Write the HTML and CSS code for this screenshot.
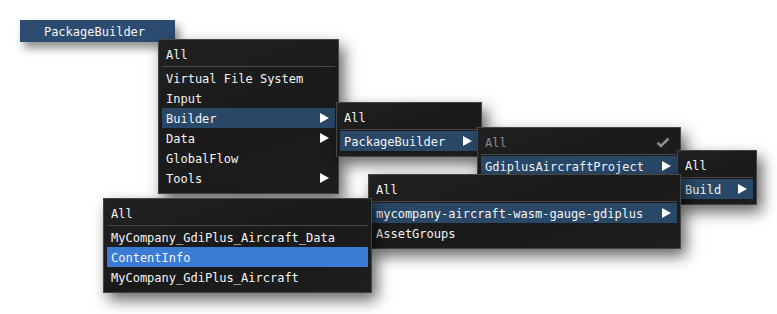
FILE: index.html
```html
<!DOCTYPE html>
<html>
<head>
<meta charset="utf-8">
<link rel="stylesheet" href="styles.css">
</head>
<body>
<div class="stage">
  <div class="root-btn">PackageBuilder</div>

  <div class="menu m1">
    <div class="row">All</div>
    <div class="sep"></div>
    <div class="row">Virtual File System</div>
    <div class="row">Input</div>
    <div class="row sel">Builder<span class="arrow"></span></div>
    <div class="row">Data<span class="arrow"></span></div>
    <div class="row">GlobalFlow</div>
    <div class="row">Tools<span class="arrow"></span></div>
  </div>

  <div class="menu m2">
    <div class="row">All</div>
    <div class="sep"></div>
    <div class="row sel">PackageBuilder<span class="arrow"></span></div>
  </div>

  <div class="menu m3">
    <div class="row dim">All<svg class="check" width="14" height="11" viewBox="0 0 14 11"><path d="M1.5 5.8 L5 9 L12.5 1.5" fill="none" stroke="#8a8a8a" stroke-width="2.6"/></svg></div>
    <div class="sep"></div>
    <div class="row sel">GdiplusAircraftProject<span class="arrow"></span></div>
  </div>

  <div class="menu m4">
    <div class="row">All</div>
    <div class="sep"></div>
    <div class="row sel">Build<span class="arrow"></span></div>
  </div>

  <div class="menu m5">
    <div class="row">All</div>
    <div class="sep"></div>
    <div class="row sel">mycompany-aircraft-wasm-gauge-gdiplus<span class="arrow"></span></div>
    <div class="row">AssetGroups</div>
  </div>

  <div class="menu m6">
    <div class="row">All</div>
    <div class="sep"></div>
    <div class="row">MyCompany_GdiPlus_Aircraft_Data</div>
    <div class="row active">ContentInfo</div>
    <div class="row">MyCompany_GdiPlus_Aircraft</div>
  </div>
</div>
</body>
</html>
```

FILE: styles.css
```css
html, body {
  margin: 0;
  padding: 0;
  background: #ffffff;
}

.stage {
  position: relative;
  width: 777px;
  height: 314px;
  overflow: hidden;
  font-family: "DejaVu Sans Mono", "Liberation Mono", monospace;
  font-size: 12px;
  color: #f4f4f4;
}

.root-btn {
  position: absolute;
  left: 20px;
  top: 20px;
  width: 155px;
  height: 22px;
  box-sizing: border-box;
  padding: 2px 6px 0 0;
  background: #2c4b70;
  color: #f4f4f4;
  display: flex;
  align-items: center;
  justify-content: center;
  box-shadow: 4px 6px 10px rgba(0, 0, 0, 0.45);
}

.menu {
  position: absolute;
  box-sizing: border-box;
  background: linear-gradient(160deg, #212121 0%, #1a1a1a 50%, #1e1e1e 100%);
  border: 1px solid #454545;
  padding: 4px 3px 5px 3px;
  box-shadow: 5px 7px 14px rgba(0, 0, 0, 0.6);
  display: flex;
  flex-direction: column;
}

.row {
  height: 20px;
  box-sizing: border-box;
  display: flex;
  align-items: center;
  padding: 2px 6px 0 4px;
  white-space: nowrap;
}

.row.sel {
  background: #294868;
}

.row.active {
  background: #3a7bd3;
}

.row.dim {
  color: #8a8a8a;
}

.sep {
  height: 1px;
  background: #484848;
  margin: 2px 0 1px 0;
}

.arrow {
  margin-left: auto;
  margin-top: -2px;
  width: 0;
  height: 0;
  border-top: 5px solid transparent;
  border-bottom: 5px solid transparent;
  border-left: 9px solid #ffffff;
}

.check {
  margin-left: auto;
  margin-right: 1px;
  margin-top: -2px;
}

.m1 { left: 158px; top: 39px; width: 181px; }
.m2 { left: 336px; top: 102px; width: 146px; }
.m3 { left: 477px; top: 127px; width: 204px; }
.m4 { left: 677px; top: 150px; width: 80px; }
.m5 { left: 368px; top: 174px; width: 313px; }
.m6 { left: 103px; top: 198px; width: 269px; }
```
